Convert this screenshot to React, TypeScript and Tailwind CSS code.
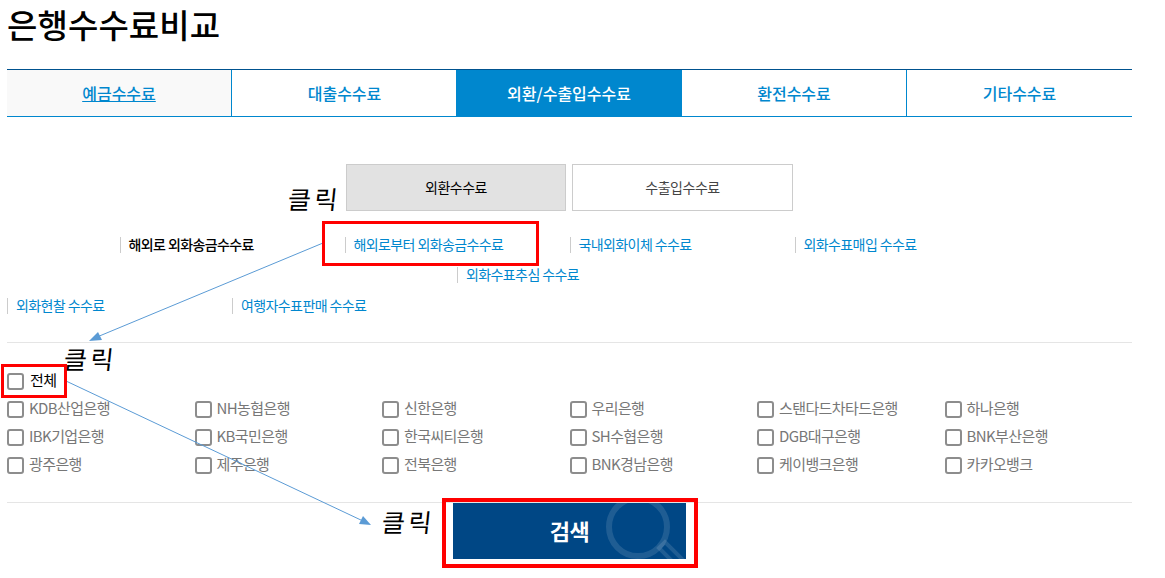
import React from 'react';

const tabs = ['예금수수료', '대출수수료', '외환/수출입수수료', '환전수수료', '기타수수료'];

const banks = [
  'KDB산업은행', 'NH농협은행', '신한은행', '우리은행', '스탠다드차타드은행', '하나은행',
  'IBK기업은행', 'KB국민은행', '한국씨티은행', 'SH수협은행', 'DGB대구은행', 'BNK부산은행',
  '광주은행', '제주은행', '전북은행', 'BNK경남은행', '케이뱅크은행', '카카오뱅크',
];

const Check = () => (
  <span className="w-[17px] h-[17px] shrink-0 rounded-[3px] border-2 border-[#8d8d8d] bg-white" />
);

const FeeLink = ({ label, active }: { label: string; active?: boolean }) => (
  <div className="w-[225px] h-4 flex items-center border-l border-[#cccccc] pl-2">
    <span className={active ? '-mt-[2px] text-[14px] tracking-[-0.6px] font-medium text-black' : '-mt-[2px] text-[14px] tracking-[-0.6px] text-[#0087ce]'}>
      {label}
    </span>
  </div>
);

const ClickNote = ({ className }: { className: string }) => (
  <span className={`absolute text-[25px] leading-none font-normal text-black tracking-[-1px] -skew-x-6 ${className}`}>클 릭</span>
);

export default function App() {
  return (
    <div className="relative w-[1165px] h-[578px] overflow-hidden bg-white pl-[7px] pr-[33px] font-['Noto_Sans_CJK_KR','Malgun_Gothic',sans-serif]">
      <h1 className="h-[69px] pt-[2px] text-[33px] leading-[44px] font-medium tracking-[0.1px] text-black">은행수수료비교</h1>

      {/* 상단 탭 */}
      <div className="grid grid-cols-5 h-[48px] border-t border-t-[#00528f] border-b border-b-[#0087ce]">
        {tabs.map((tab, i) => (
          <div
            key={tab}
            className={
              i === 2
                ? 'flex items-center justify-center -ml-px bg-[#0087ce] text-white text-[16px] font-medium'
                : i === 0
                  ? 'flex items-center justify-center bg-[#f9f9f9] border-r border-[#0087ce] text-[#0087ce] text-[16px] font-medium underline'
                  : i === 3
                    ? 'flex items-center justify-center border-r border-[#0087ce] text-[#0087ce] text-[16px] font-medium'
                    : 'flex items-center justify-center text-[#0087ce] text-[16px] font-medium'
            }
          >
            {tab}
          </div>
        ))}
      </div>

      {/* 수수료 구분 */}
      <div className="flex justify-center gap-[6px] pt-[47px]">
        <div className="w-[220px] h-[47px] flex items-center justify-center bg-[#e2e2e2] border border-[#cccccc] text-[14px] tracking-[-0.5px] text-black">외환수수료</div>
        <div className="w-[221px] h-[47px] flex items-center justify-center bg-white border border-[#cccccc] text-[14px] tracking-[-0.5px] text-[#444444]">수출입수수료</div>
      </div>

      <div className="pt-[26px] flex justify-center">
        <FeeLink label="해외로 외화송금수수료" active />
        <FeeLink label="해외로부터 외화송금수수료" />
        <FeeLink label="국내외화이체 수수료" />
        <FeeLink label="외화수표매입 수수료" />
      </div>
      <div className="pt-[14px] flex justify-center">
        <FeeLink label="외화수표추심 수수료" />
      </div>
      <div className="pt-[15px] flex">
        <FeeLink label="외화현찰 수수료" />
        <FeeLink label="여행자수표판매 수수료" />
      </div>

      {/* 은행 선택 */}
      <div className="mt-[28px] border-t border-[#e5e5e5] pt-[29px]">
        <label className="flex items-center gap-[6px] h-[18px] text-[15px] tracking-[-0.5px] text-black">
          <Check />
          <span className="-mt-[2px]">전체</span>
        </label>
        <div className="grid grid-cols-6 gap-y-[10px] mt-[10px] pb-[28px] border-b border-[#e5e5e5]">
          {banks.map((bank) => (
            <label key={bank} className="flex items-center gap-[5px] h-[18px] text-[15px] tracking-[-0.6px] text-[#777777]">
              <Check />
              <span className="-mt-[2px]">{bank}</span>
            </label>
          ))}
        </div>
      </div>

      <div className="flex justify-center">
        <button className="relative w-[233px] h-[56px] overflow-hidden bg-[#004785] text-white text-[22px] font-bold tracking-[-0.5px]">
          <svg className="absolute inset-0" width="233" height="56" viewBox="0 0 233 56" fill="none">
            <circle cx="185" cy="24" r="29" stroke="#fff" strokeOpacity="0.12" strokeWidth="6" />
            <path d="M206 45l6-6 22 22-6 6z" stroke="#fff" strokeOpacity="0.12" strokeWidth="4" />
          </svg>
          <span className="relative -top-px">검색</span>
        </button>
      </div>

      {/* 캡처 위에 덧그린 표시 */}
      <svg className="absolute inset-0 pointer-events-none" width="1165" height="578" viewBox="0 0 1165 578" fill="none">
        <path d="M323 243L97 337" stroke="#5b9bd5" strokeWidth="1" />
        <path d="M89 341l9-9 4 8z" fill="#5b9bd5" />
        <path d="M66 381L363 521" stroke="#5b9bd5" strokeWidth="1" />
        <path d="M371 525l-12-1 4-8z" fill="#5b9bd5" />
      </svg>
      <div className="absolute left-[322px] top-[221px] w-[217px] h-[45px] border-[3px] border-[#ff0000]" />
      <div className="absolute left-[1px] top-[364px] w-[66px] h-[34px] border-[3px] border-[#ff0000]" />
      <div className="absolute left-[442px] top-[498px] w-[256px] h-[70px] border-[4px] border-[#ff0000]" />
      <ClickNote className="left-[288px] top-[186px]" />
      <ClickNote className="left-[64px] top-[346px]" />
      <ClickNote className="left-[382px] top-[509px]" />
    </div>
  );
}
